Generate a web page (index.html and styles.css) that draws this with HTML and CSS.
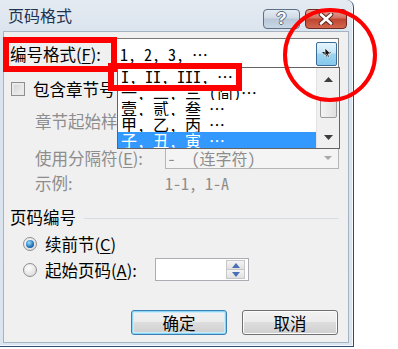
FILE: index.html
```html
<!DOCTYPE html>
<html lang="zh-CN">
<head>
  <meta charset="UTF-8">
  <title>页码格式</title>
  <link rel="stylesheet" href="styles.css">
</head>
<body>

  <div class="window">
    <!-- Title bar -->
    <div class="titlebar">
      <span class="title">页码格式</span>
      <div class="caption-btns">
        <span class="cap help">?</span>
        <span class="cap close">
          <svg width="16" height="12" viewBox="0 0 16 12">
            <path d="M3 1.5 L13 10.5 M13 1.5 L3 10.5" stroke="#5a2620" stroke-width="4.6" stroke-linecap="round"/>
            <path d="M3 1.5 L13 10.5 M13 1.5 L3 10.5" stroke="#fff" stroke-width="2.6" stroke-linecap="round"/>
          </svg>
        </span>
      </div>
    </div>

    <!-- Dialog body -->
    <div class="client">
      <div class="row row-format">
        <span class="lbl">编号格式(<u>F</u>):</span>
        <div class="combo combo-format">
          <span class="combo-text mono">1, 2, 3, …</span>
          <span class="combo-btn hot">
            <svg width="13" height="13" viewBox="0 0 13 13">
              <path d="M2 5 L6.5 9.5 L11 5 Z" fill="#1b1b1b"/>
              <path d="M5 1 L5 9 L6.8 7.4 L8.1 10.4 L9.4 9.8 L8.2 6.9 L10.6 6.8 Z" fill="#111" stroke="#fff" stroke-width="0.7"/>
            </svg>
          </span>
        </div>
      </div>

      <div class="row row-check">
        <span class="checkbox"></span>
        <span class="lbl">包含章节号</span>
      </div>

      <div class="row row-indent">
        <span class="lbl dis">章节起始样式</span>
      </div>

      <div class="row row-indent row-sep">
        <span class="lbl dis col1">使用分隔符(<u>E</u>):</span>
        <div class="combo combo-dis">
          <span class="combo-text mono">-&nbsp;&nbsp;(连字符)</span>
          <span class="combo-arrow">
            <svg width="10" height="6" viewBox="0 0 10 6"><path d="M1 1 L5 5 L9 1 Z" fill="#a8a8a8"/></svg>
          </span>
        </div>
      </div>

      <div class="row row-indent row-example">
        <span class="lbl dis col1">示例:</span>
        <span class="mono dis">1-1, 1-A</span>
      </div>

      <div class="group-head">
        <span class="lbl">页码编号</span>
        <span class="group-line"></span>
      </div>

      <div class="row row-radio row-radio1">
        <span class="radio checked"></span>
        <span class="lbl">续前节(<u>C</u>)</span>
      </div>

      <div class="row row-radio row-radio2">
        <span class="radio"></span>
        <span class="lbl col-radio">起始页码(<u>A</u>):</span>
        <div class="spin">
          <span class="spin-btns">
            <span class="spin-btn"><svg width="8" height="5" viewBox="0 0 8 5"><path d="M0 5 L4 0 L8 5 Z" fill="#4a6fb4"/></svg></span>
            <span class="spin-btn"><svg width="8" height="5" viewBox="0 0 8 5"><path d="M0 0 L4 5 L8 0 Z" fill="#4a6fb4"/></svg></span>
          </span>
        </div>
      </div>

      <div class="buttons">
        <span class="btn default">确定</span>
        <span class="btn">取消</span>
      </div>

      <!-- Open drop-down list of the number format combo -->
      <div class="droplist">
        <div class="items mono">
          <div class="item">I, II, III, …</div>
          <div class="item">一, 二, 三 (简)…</div>
          <div class="item">壹, 贰, 叁 …</div>
          <div class="item">甲, 乙, 丙 …</div>
          <div class="item selected">子, 丑, 寅 …</div>
        </div>
        <div class="scrollbar">
          <span class="sb-arrow"><svg width="9" height="5" viewBox="0 0 9 5"><path d="M0 5 L4.5 0 L9 5 Z" fill="#3c3c3c"/></svg></span>
          <span class="sb-track"><span class="sb-thumb"></span></span>
          <span class="sb-arrow"><svg width="9" height="5" viewBox="0 0 9 5"><path d="M0 0 L4.5 5 L9 0 Z" fill="#3c3c3c"/></svg></span>
        </div>
      </div>
    </div>
  </div>

  <!-- Red annotation marks -->
  <div class="mark mark-label"></div>
  <div class="mark mark-item"></div>
  <div class="mark mark-circle"></div>

</body>
</html>
```

FILE: styles.css
```css
/* General */
body {
  margin: 0;
  background: #fff;
  font-family: "Noto Sans CJK SC", sans-serif;
  color: #000;
  position: relative;
  width: 398px;
  height: 349px;
  overflow: hidden;
}

.mono {
  font-family: "Noto Sans Mono CJK SC", "Liberation Mono", "Noto Sans CJK SC", monospace;
  font-size: 16px;
}

u {
  text-decoration: underline;
  text-underline-offset: 2px;
}

/* Window frame */
.window {
  width: 354px;
  height: 347px;
  background: linear-gradient(#e4eaf1, #d9e3ee 40px, #dbe5ef);
  border-right: 1px solid #2e4e73;
  border-bottom: 1px solid #2e4e73;
  border-top-right-radius: 7px;
  box-shadow: inset -1px -1px 0 #f4f8fb;
  box-sizing: border-box;
  padding: 0 4px 3px 3px;
  display: flex;
  flex-direction: column;
}

.titlebar {
  height: 31px;
  display: flex;
  align-items: center;
  justify-content: space-between;
  flex-shrink: 0;
}

.title {
  font-size: 16px;
  color: #1e3452;
  margin-left: 5px;
  margin-top: -2px;
}

.caption-btns {
  display: flex;
  gap: 5px;
  margin-right: 2px;
  margin-top: 9px;
  align-self: flex-start;
}

.cap {
  height: 20px;
  border: 1px solid #5b6f86;
  border-radius: 4px;
  box-sizing: border-box;
  display: flex;
  align-items: center;
  justify-content: center;
}

.help {
  width: 37px;
  background: linear-gradient(#e4ebf3, #cfdae6 45%, #b8c8d9 50%, #c9d7e5);
  font: bold 17px/18px "Liberation Sans", sans-serif;
  color: #fbfcfd;
  text-shadow: 1px 0 0 #5a6a7c, -1px 0 0 #5a6a7c, 0 1px 0 #5a6a7c, 0 -1px 0 #5a6a7c;
}

.close {
  width: 42px;
  border-color: #6b2a22;
  background: linear-gradient(#e5a99c, #d0705f 45%, #c0432f 50%, #d2674f);
}

/* Client area */
.client {
  flex: 1;
  position: relative;
  background: #f0f0f0;
  border: 1px solid #a5b3c2;
  padding: 7px 9px 0 6px;
  font-size: 16.5px;
}

.row {
  display: flex;
  align-items: center;
}

.lbl {
  white-space: nowrap;
  line-height: 20px;
}

.dis {
  color: #8d8d8d;
}

.row-format {
  height: 31px;
  margin-top: -1px;
}

.combo {
  box-sizing: border-box;
  border: 1px solid #8e9aa6;
  background: #fff;
  display: flex;
  align-items: center;
}

.combo-format {
  margin-left: auto;
  width: 223px;
  height: 31px;
  padding: 0 1px 0 3px;
  border-color: #7a7a7a;
}

.combo-text {
  flex: 1;
  white-space: nowrap;
}

.combo-btn {
  width: 21px;
  height: 24px;
  box-sizing: border-box;
  display: flex;
  align-items: center;
  justify-content: center;
}

.combo-btn.hot {
  border: 1px solid #3c6d96;
  border-radius: 2px;
  background: linear-gradient(#e6f5fc, #c6e6f7 45%, #9dd5f1 50%, #86c8ec);
}

.row-check {
  height: 24px;
  margin-top: 8px;
  padding-left: 1px;
}

.checkbox {
  width: 14px;
  height: 14px;
  box-sizing: border-box;
  border: 1px solid #8f8f8f;
  background: linear-gradient(135deg, #cfcfcf, #f5f5f5);
  box-shadow: inset 0 0 0 2px #e9e9e9;
  margin-right: 8px;
}

.row-indent {
  height: 24px;
  margin-top: 8px;
  padding-left: 25px;
}

.col1 {
  width: 130px;
}

.row-sep {
  margin-top: 13px;
}

.combo-dis {
  width: 175px;
  height: 21px;
  background: #f4f4f4;
  border-color: #b5b5b5;
  padding-left: 2px;
  color: #8d8d8d;
}

.combo-arrow {
  width: 20px;
  display: flex;
  justify-content: center;
}

.row-example {
  height: 20px;
  margin-top: 3px;
}

.group-head {
  display: flex;
  align-items: center;
  height: 20px;
  margin-top: 14px;
}

.group-line {
  flex: 1;
  height: 1px;
  background: #d5dfe5;
  margin-left: 8px;
  margin-top: 2px;
}

.row-radio {
  padding-left: 13px;
}

.row-radio1 {
  height: 20px;
  margin-top: 7px;
}

.row-radio2 {
  height: 23px;
  margin-top: 4px;
}

.radio {
  width: 14px;
  height: 14px;
  border-radius: 50%;
  box-sizing: border-box;
  border: 1px solid #8f8f8f;
  background: radial-gradient(circle at 40% 35%, #fdfdfd, #d4d4d4);
  margin-right: 8px;
  position: relative;
}

.radio.checked::after {
  content: "";
  position: absolute;
  left: 2px;
  top: 2px;
  width: 8px;
  height: 8px;
  border-radius: 50%;
  background: radial-gradient(circle at 40% 35%, #9fe0ff, #1d6fb5 60%, #0c3f73);
}

.col-radio {
  width: 110px;
}

.spin {
  width: 94px;
  height: 23px;
  box-sizing: border-box;
  border: 1px solid #abadb3;
  background: #fff;
  display: flex;
  justify-content: flex-end;
  padding: 1px 3px 1px 0;
}

.spin-btns {
  display: flex;
  flex-direction: column;
  width: 19px;
}

.spin-btn {
  flex: 1;
  display: flex;
  align-items: center;
  justify-content: center;
  background: linear-gradient(#f4f4f4, #e1e1e1);
  border: 1px solid #c7c7c7;
}

.spin-btn + .spin-btn {
  border-top: none;
}

/* Buttons */
.buttons {
  display: flex;
  justify-content: flex-end;
  gap: 15px;
  margin-top: 29px;
  margin-right: 1px;
}

.btn {
  width: 96px;
  height: 25px;
  box-sizing: border-box;
  border: 1px solid #707070;
  border-radius: 3px;
  background: linear-gradient(#f2f2f2, #ebebeb 50%, #dddddd 50%, #cfcfcf);
  box-shadow: inset 0 0 0 1px #fbfbfb;
  display: flex;
  align-items: center;
  justify-content: center;
  line-height: 20px;
}

.btn.default {
  border-color: #3c7fb1;
  box-shadow: inset 0 0 0 1px #8ad4f5, inset 0 0 0 2px #c9ecfb;
}

/* Drop-down list overlay */
.droplist {
  position: absolute;
  left: 113px;
  top: 35px;
  width: 223px;
  height: 82px;
  box-sizing: border-box;
  border: 1px solid #646464;
  background: #fff;
  display: flex;
  z-index: 2;
}

.items {
  flex: 1;
}

.item {
  height: 16px;
  line-height: 16px;
  padding-left: 3px;
  white-space: nowrap;
  overflow: hidden;
}

.item.selected {
  background: #3399ff;
  color: #fff;
}

.scrollbar {
  width: 22px;
  display: flex;
  flex-direction: column;
  background: #f0f0f0;
  border-left: 1px solid #e3e3e3;
}

.sb-arrow {
  height: 22px;
  display: flex;
  align-items: center;
  justify-content: center;
}

.sb-track {
  flex: 1;
  display: flex;
  align-items: center;
  justify-content: center;
}

.sb-thumb {
  width: 17px;
  height: 20px;
  box-sizing: border-box;
  border: 1px solid #9b9b9b;
  border-radius: 2px;
  background: linear-gradient(90deg, #f3f3f3, #e0e0e0);
}

/* Red annotations */
.mark {
  position: absolute;
  border: 6px solid #f00;
  box-sizing: border-box;
  z-index: 5;
}

.mark-label {
  left: 3px;
  top: 37px;
  width: 114px;
  height: 35px;
}

.mark-item {
  left: 108px;
  top: 63px;
  width: 134px;
  height: 28px;
}

.mark-circle {
  left: 283px;
  top: 8px;
  width: 94px;
  height: 94px;
  border-width: 4.5px;
  border-radius: 50%;
}
```
